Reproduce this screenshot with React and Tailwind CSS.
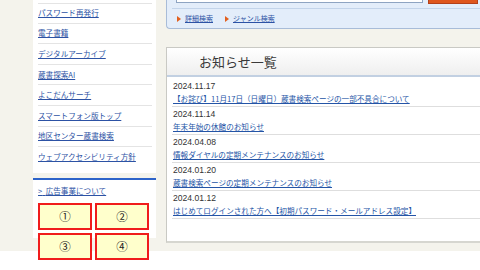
import React from "react";

const sideLinks = [
  "パスワード再発行",
  "電子書籍",
  "デジタルアーカイブ",
  "蔵書探索AI",
  "よこだんサーチ",
  "スマートフォン版トップ",
  "地区センター蔵書検索",
  "ウェブアクセシビリティ方針",
];

const notices = [
  { date: "2024.11.17", title: "【お詫び】11月17日（日曜日）蔵書検索ページの一部不具合について" },
  { date: "2024.11.14", title: "年末年始の休館のお知らせ" },
  { date: "2024.04.08", title: "情報ダイヤルの定期メンテナンスのお知らせ" },
  { date: "2024.01.20", title: "蔵書検索ページの定期メンテナンスのお知らせ" },
  { date: "2024.01.12", title: "はじめてログインされた方へ【初期パスワード・メールアドレス設定】" },
];

const jp = "font-['Noto_Sans_CJK_JP',sans-serif]";

const Arrow = () => (
  <span className="inline-block w-0 h-0 border-y-[3px] border-y-transparent border-l-[4px] border-l-[#e2601f] mr-[4px]" />
);

export default function App() {
  return (
    <div className={`w-[480px] h-[270px] overflow-hidden bg-white ${jp}`}>
      <div className="h-[251px] bg-[#f4f3ec] flex pl-[33px]">
        {/* left column */}
        <div className="w-[123px] shrink-0 flex flex-col">
          <div className="bg-white pt-[3px] pb-[5px] pl-[5px] pr-[4px]">
            <ul>
              {sideLinks.map((t, i) => (
                <li
                  key={t}
                  className={`h-[20.6px] flex items-center ${i === 0 ? "border-t" : ""} ${
                    i < sideLinks.length - 1 ? "border-b" : ""
                  } border-[#e4e4e4]`}
                >
                  <a className="text-[7.6px] leading-[10px] text-[#2c52a4] underline">{t}</a>
                </li>
              ))}
            </ul>
          </div>
          <div className="mt-[5px] h-[60px] bg-white border-t-2 border-[#2d63c9] pl-[5px] pt-[6px]">
            <a className="block text-[7.6px] leading-[10px] text-[#2c52a4] underline">&gt;{"\u00a0\u00a0"}広告事業について</a>
            <div className="mt-[7px] grid grid-cols-[54px_54px] gap-[3px]">
              {["①", "②", "③", "④"].map((n) => (
                <div
                  key={n}
                  className="h-[27px] border-2 border-[#f01c1c] bg-[#ffffcc] flex items-center justify-center text-[11.5px] text-[#222]"
                >
                  {n}
                </div>
              ))}
            </div>
          </div>
        </div>

        {/* right column */}
        <div className="ml-[10px] w-[330px] shrink-0 flex flex-col">
          <div className="h-[29px] bg-[#e3edfa] border-l border-b border-[#a8bcd8] rounded-bl-[4px]">
            <div className="flex h-[5px]">
              <div className="ml-[9px] w-[247px] h-[3px] bg-white border-x border-b border-[#8ea4c2]" />
              <div className="ml-[5px] w-[50px] h-[4px] bg-[#df561d] border-x border-b border-[#b3401a]" />
            </div>
            <div className="mt-[3px] ml-[5px] border-t border-[#c3d4ea]" />
            <div className="flex items-center h-[19px] pl-[10px] text-[7px] leading-[9px]">
              <Arrow />
              <a className="text-[#2c52a4] underline">詳細検索</a>
              <span className="ml-[12px]" />
              <Arrow />
              <a className="text-[#2c52a4] underline">ジャンル検索</a>
            </div>
          </div>

          <div className="mt-[18px] h-[196px] bg-white border border-r-0 border-[#c9c9c4] border-b-2 border-b-[#d6d6d0]">
            <div className="h-[29px] bg-gradient-to-b from-white to-[#efefef] border-b-2 border-[#c2d0e2] flex items-center pl-[32px]">
              <h2 className="text-[13px] leading-[16px] text-[#3a3a3a] font-normal">お知らせ一覧</h2>
            </div>
            <ul className="ml-[5px] pt-[2px]">
              {notices.map((n) => (
                <li key={n.date} className="pt-px pb-px border-b border-[#dedede]">
                  <div className="text-[8.6px] leading-[12px] text-[#333] font-['Liberation_Sans',sans-serif] pl-px">
                    {n.date}
                  </div>
                  <a className="block text-[7.6px] leading-[13px] text-[#2454a6] underline pl-px">
                    {n.title}
                  </a>
                </li>
              ))}
            </ul>
          </div>
        </div>
      </div>
    </div>
  );
}
